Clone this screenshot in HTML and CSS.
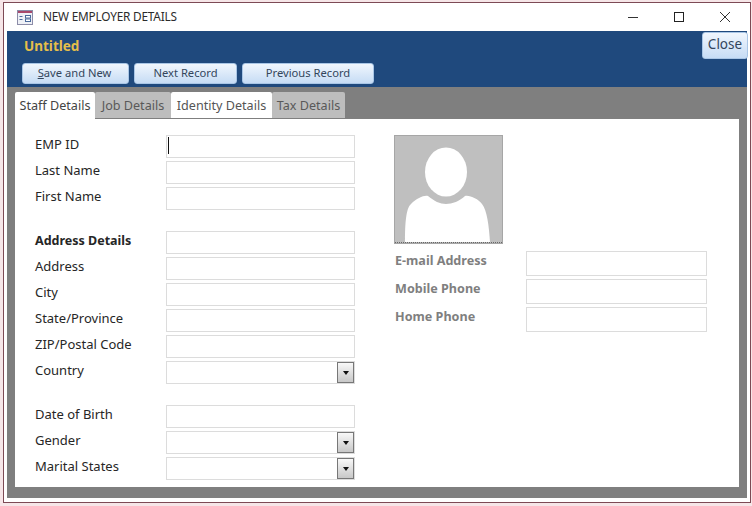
FILE: index.html
```html
<!DOCTYPE html>
<html lang="en">
<head>
<meta charset="utf-8">
<title>New Employer Details</title>
<link rel="stylesheet" href="styles.css">
</head>
<body>
<div class="window">
  <div class="titlebar">
    <svg class="app-icon" width="16" height="15" viewBox="0 0 16 15">
      <rect x="0.5" y="0.5" width="15" height="14" fill="#eef0f6" stroke="#8c8ca8"/>
      <rect x="1" y="1" width="14" height="2" fill="#a8486c"/>
      <path d="M2.5 6.5h3M2.5 9.5h3" stroke="#4a6a9c"/>
      <rect x="8.5" y="5.5" width="5" height="2.5" fill="#fff" stroke="#4a6a9c"/>
      <rect x="8.5" y="9" width="5" height="2.5" fill="#fff" stroke="#4a6a9c"/>
    </svg>
    <span class="title">NEW EMPLOYER DETAILS</span>
    <div class="controls">
      <svg width="12" height="12" viewBox="0 0 12 12"><path d="M1 6.5h10" stroke="#333"/></svg>
      <svg width="12" height="12" viewBox="0 0 12 12"><rect x="1.5" y="1.5" width="9" height="9" fill="none" stroke="#222"/></svg>
      <svg width="12" height="12" viewBox="0 0 12 12"><path d="M1 1l10 10M11 1L1 11" stroke="#333"/></svg>
    </div>
  </div>
  <div class="header">
    <div class="form-name">Untitled</div>
    <div class="actions">
      <button class="btn btn-save" type="button"><u>S</u>ave and New</button>
      <button class="btn btn-next" type="button">Next Record</button>
      <button class="btn btn-prev" type="button">Previous Record</button>
    </div>
    <button class="btn btn-close" type="button">Close</button>
  </div>
  <div class="body">
    <div class="tabs">
      <div class="tab tab-on tab-staff">Staff Details</div>
      <div class="tab tab-job">Job Details</div>
      <div class="tab tab-light tab-identity">Identity Details</div>
      <div class="tab tab-tax">Tax Details</div>
    </div>
    <div class="panel">
      <div class="col-left">
        <div class="group">
          <div class="row"><span class="label">EMP ID</span><div class="field"><span class="caret"></span></div></div>
          <div class="row"><span class="label">Last Name</span><div class="field"></div></div>
          <div class="row"><span class="label">First Name</span><div class="field"></div></div>
        </div>
        <div class="group">
          <div class="row"><span class="label label-bold">Address Details</span><div class="field"></div></div>
          <div class="row"><span class="label">Address</span><div class="field"></div></div>
          <div class="row"><span class="label">City</span><div class="field"></div></div>
          <div class="row"><span class="label">State/Province</span><div class="field"></div></div>
          <div class="row"><span class="label">ZIP/Postal Code</span><div class="field"></div></div>
          <div class="row"><span class="label">Country</span><div class="field"><span class="drop"><i class="arrow"></i></span></div></div>
        </div>
        <div class="group">
          <div class="row"><span class="label">Date of Birth</span><div class="field"></div></div>
          <div class="row"><span class="label">Gender</span><div class="field"><span class="drop"><i class="arrow"></i></span></div></div>
          <div class="row"><span class="label">Marital States</span><div class="field"><span class="drop"><i class="arrow"></i></span></div></div>
        </div>
      </div>
      <div class="col-right">
        <div class="photo">
          <svg width="107" height="107" viewBox="0 0 107 107">
            <rect width="107" height="107" fill="#bfbfbf"/>
            <ellipse cx="51" cy="36" rx="21" ry="24.5" fill="#fff"/>
            <path d="M10 106C10 88 11 72 16 68C22 62 29 59 33 60C39 65 45 68 51 68C57 68 65 65 70 60C75 59 83 63 87 68C92 74 94 90 95 106Z" fill="#fff"/>
            <path d="M0 106.5H107" stroke="#666" stroke-dasharray="1 1"/>
          </svg>
        </div>
        <div class="contact">
          <div class="row-c"><span class="label-c">E-mail Address</span><div class="field-c"></div></div>
          <div class="row-c"><span class="label-c">Mobile Phone</span><div class="field-c"></div></div>
          <div class="row-c"><span class="label-c">Home Phone</span><div class="field-c"></div></div>
        </div>
      </div>
    </div>
  </div>
</div>
</body>
</html>
```

FILE: styles.css
```css
* { box-sizing: border-box; }
html, body { margin: 0; padding: 0; }
body {
  width: 752px;
  height: 506px;
  background: #f6e6e8;
  font-family: "Noto Sans", "Open Sans", sans-serif;
  padding: 2px 1px 3px 3px;
  overflow: hidden;
}
.window {
  height: 501px;
  background: #fff;
  border: 1px solid #7d4a55;
  padding-bottom: 4px;
  display: flex;
  flex-direction: column;
}
.titlebar {
  height: 28px;
  margin: 0 3px;
  flex: none;
  display: flex;
  align-items: center;
  padding-left: 10px;
  background: #fff;
}
.app-icon { flex: none; }
.title {
  margin-left: 10px;
  margin-top: -3px;
  font-size: 11.8px;
  letter-spacing: -0.2px;
  color: #2b2b2b;
}
.controls {
  margin-left: auto;
  display: flex;
  gap: 34px;
  padding-right: 16px;
}
.header {
  position: relative;
  height: 56px;
  flex: none;
  margin: 0 3px;
  background: #1f497d;
  padding: 6px 0 0 15px;
}
.form-name {
  height: 18px;
  font-size: 13.5px;
  line-height: 19px;
  font-weight: 700;
  color: #e6bf4a;
  padding-left: 2px;
}
.actions {
  display: flex;
  gap: 5px;
  margin-top: 8px;
}
.btn {
  height: 21px;
  padding: 0 0 2px;
  font-family: inherit;
  font-size: 11.2px;
  line-height: 17px;
  color: #33465c;
  border: 1px solid #a9c6e6;
  border-radius: 3px;
  background: linear-gradient(#f0f6fd, #c6dcf5);
}
.btn-save { width: 107px; padding-right: 2px; }
.btn-next { width: 103px; }
.btn-prev { width: 132px; }
.btn-close {
  position: absolute;
  top: 1px;
  left: 695px;
  width: 46px;
  height: 27px;
  font-size: 13.5px;
  padding-bottom: 2px;
}
.body {
  flex: 1;
  margin: 0 3px;
  background: #7f7f7f;
  padding: 5px 8px 11px;
  display: flex;
  flex-direction: column;
}
.tabs {
  display: flex;
  align-items: flex-start;
  height: 27px;
  flex: none;
}
.tab {
  height: 26px;
  font-size: 12.6px;
  line-height: 27px;
  text-align: center;
  color: #595959;
  background: #bdbdbd;
  border-top-left-radius: 2px;
  border-top-right-radius: 2px;
}
.tab-on { height: 27px; background: #fff; color: #444; }
.tab-light { background: #fff; color: #555; }
.tab-staff { width: 80px; }
.tab-job { width: 76px; }
.tab-identity { width: 101px; }
.tab-tax { width: 73px; }
.panel {
  flex: 1;
  background: #fff;
  padding: 16px 0 0 20px;
  display: flex;
}
.col-left {
  width: 320px;
  flex: none;
  display: flex;
  flex-direction: column;
  gap: 21px;
}
.group { display: flex; flex-direction: column; gap: 3px; }
.row { display: flex; height: 23px; }
.label {
  width: 131px;
  flex: none;
  font-size: 13px;
  line-height: 18px;
  color: #262626;
}
.label-bold { font-size: 12.5px; line-height: 20px; font-weight: 700; }
.field {
  width: 189px;
  height: 23px;
  position: relative;
  border: 1px solid #dcdcdc;
  background: #fff;
}
.caret {
  position: absolute;
  left: 1px;
  top: 1px;
  width: 1px;
  height: 17px;
  background: #111;
}
.drop {
  position: absolute;
  right: 0;
  top: 0;
  width: 17px;
  height: 21px;
  border: 1px solid #777;
  background: linear-gradient(#f8f8f8, #c8c8c8);
  display: flex;
  align-items: center;
  justify-content: center;
}
.arrow {
  width: 0;
  height: 0;
  border-left: 3.5px solid transparent;
  border-right: 3.5px solid transparent;
  border-top: 4px solid #111;
}
.col-right {
  margin-left: 39px;
  display: flex;
  flex-direction: column;
}
.photo {
  width: 109px;
  height: 109px;
  border: 1px solid #a6a6a6;
}
.photo svg { display: block; }
.contact {
  margin-top: 7px;
  display: flex;
  flex-direction: column;
  gap: 3px;
}
.row-c { display: flex; height: 25px; }
.label-c {
  width: 132px;
  flex: none;
  padding-left: 1px;
  font-size: 12.6px;
  line-height: 20px;
  font-weight: 700;
  color: #7f7f7f;
}
.field-c {
  width: 181px;
  height: 25px;
  border: 1px solid #dcdcdc;
}
```
